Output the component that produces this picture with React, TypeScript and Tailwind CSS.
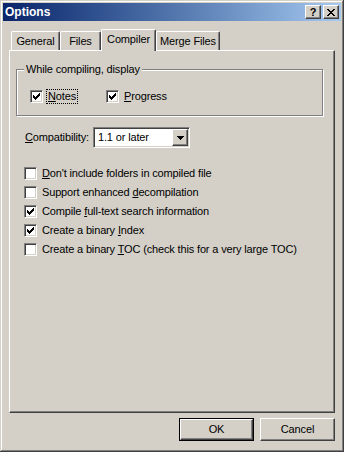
import React from "react";

const raised =
  "border border-t-white border-l-white border-r-[#404040] border-b-[#404040] shadow-[inset_-1px_-1px_#808080]";
const sunken =
  "border border-t-[#808080] border-l-[#808080] border-r-white border-b-white shadow-[inset_1px_1px_#404040,inset_-1px_-1px_#d4d0c8]";

// classic 7x7 tick, one rect per run of pixels
const tickRuns: [number, number, number][] = [
  [0, 6, 1],
  [1, 5, 2],
  [2, 0, 1],
  [2, 4, 3],
  [3, 0, 2],
  [3, 3, 3],
  [4, 0, 5],
  [5, 1, 3],
  [6, 2, 1],
];

const Tick = () => (
  <svg width="7" height="7" viewBox="0 0 7 7" shapeRendering="crispEdges">
    {tickRuns.map(([y, x, w], i) => (
      <rect key={i} x={x} y={y} width={w} height={1} fill="#000" />
    ))}
  </svg>
);

const CheckBox = ({ checked }: { checked?: boolean }) => (
  <div className={`w-[13px] h-[13px] shrink-0 bg-white flex items-center justify-center ${sunken}`}>
    {checked && <Tick />}
  </div>
);

const Arrow = () => (
  <svg width="7" height="4" viewBox="0 0 7 4" shapeRendering="crispEdges">
    <rect x="0" y="0" width="7" height="1" fill="#000" />
    <rect x="1" y="1" width="5" height="1" fill="#000" />
    <rect x="2" y="2" width="3" height="1" fill="#000" />
    <rect x="3" y="3" width="1" height="1" fill="#000" />
  </svg>
);

const CloseGlyph = () => (
  <svg width="8" height="7" viewBox="0 0 8 7" shapeRendering="crispEdges">
    {[0, 1, 2, 3, 4, 5, 6].map((i) => (
      <React.Fragment key={i}>
        <rect x={i} y={i} width={2} height={1} fill="#000" />
        <rect x={6 - i} y={i} width={2} height={1} fill="#000" />
      </React.Fragment>
    ))}
  </svg>
);

const Row = ({ checked, children }: { checked?: boolean; children: React.ReactNode }) => (
  <div className="h-[13px] flex items-center gap-[5px]">
    <CheckBox checked={checked} />
    <span className="leading-[13px] whitespace-nowrap">{children}</span>
  </div>
);

const Tab = ({ label, width, active }: { label: string; width: string; active?: boolean }) =>
  active ? (
    <div
      className={`${width} h-[22px] -mb-[1px] relative z-10 bg-[#d4d0c8] border-l border-t border-r border-l-white border-t-white border-r-[#404040] rounded-tl-[2px] rounded-tr-[2px] shadow-[inset_-1px_0_#808080] flex items-center justify-center pb-[3px]`}
    >
      {label}
    </div>
  ) : (
    <div
      className={`${width} h-[19px] bg-[#d4d0c8] border-l border-t border-r border-l-white border-t-white border-r-[#404040] rounded-tl-[2px] rounded-tr-[2px] shadow-[inset_-1px_0_#808080] flex items-center justify-center pt-[1px]`}
    >
      {label}
    </div>
  );

export default function App() {
  return (
    <div className="w-[344px] h-[452px] bg-[#d4d0c8] p-[3px] flex flex-col text-[11px] tracking-[-0.15px] text-black font-['Liberation_Sans',Arial,sans-serif] shadow-[inset_-1px_-1px_#404040,inset_1px_1px_#d4d0c8,inset_-2px_-2px_#808080,inset_2px_2px_#ffffff]">
      {/* title bar */}
      <div className="h-[18px] shrink-0 flex items-center justify-between pl-[2px] pr-[2px] bg-linear-to-r from-[#0a246a] to-[#a6caf0]">
        <span className="text-white font-bold text-[12px] tracking-normal leading-[13px]">Options</span>
        <div className="flex gap-[2px]">
          <div className={`w-[16px] h-[14px] bg-[#d4d0c8] flex items-center justify-center font-bold text-[11px] leading-[11px] ${raised}`}>
            ?
          </div>
          <div className={`w-[16px] h-[14px] bg-[#d4d0c8] flex items-center justify-center ${raised}`}>
            <CloseGlyph />
          </div>
        </div>
      </div>

      <div className="px-[6px] flex flex-col">
        {/* tabs */}
        <div className="mt-[8px] h-[21px] pl-[2px] flex items-end">
          <Tab label="General" width="w-[49px]" />
          <Tab label="Files" width="w-[41px]" />
          <Tab label="Compiler" width="w-[55px]" active />
          <Tab label="Merge Files" width="w-[64px]" />
        </div>

        {/* panel */}
        <div className="w-[326px] h-[363px] border border-l-white border-t-white border-r-[#404040] border-b-[#404040] shadow-[inset_-1px_-1px_#808080] pl-[6px] flex flex-col">
          {/* group box */}
          <div className="mt-[18px] w-[307px] h-[47px] relative border border-[#808080] shadow-[inset_1px_1px_#ffffff,1px_1px_#ffffff] pt-[19px] pl-[13px] flex items-start">
            <span className="absolute -top-[7px] left-[7px] px-[2px] bg-[#d4d0c8] leading-[13px] whitespace-nowrap">
              While compiling, display
            </span>
            <div className="w-[76px] h-[15px] flex items-center gap-[3px]">
              <CheckBox checked />
              <span className="border border-dotted border-black px-[1px] leading-[13px]">
                <u>N</u>otes
              </span>
            </div>
            <div className="h-[15px] flex items-center gap-[3px]">
              <CheckBox checked />
              <span className="border border-transparent px-[1px] leading-[13px]">
                <u>P</u>rogress
              </span>
            </div>
          </div>

          {/* compatibility */}
          <div className="mt-[11px] ml-[9px] h-[21px] flex items-center">
            <span className="w-[68px] leading-[13px]">
              <u>C</u>ompatibility:
            </span>
            <div className={`w-[97px] h-[21px] bg-white flex items-center p-[1px] ${sunken}`}>
              <span className="flex-1 pl-[3px] leading-[13px]">1.1 or later</span>
              <div className={`w-[16px] h-[17px] bg-[#d4d0c8] flex items-center justify-center ${raised}`}>
                <Arrow />
              </div>
            </div>
          </div>

          {/* options list */}
          <div className="mt-[19px] ml-[8px] flex flex-col gap-[6px]">
            <Row>
              <u>D</u>on't include folders in compiled file
            </Row>
            <Row>
              Support enhanced <u>d</u>ecompilation
            </Row>
            <Row checked>
              Compile <u>f</u>ull-text search information
            </Row>
            <Row checked>
              Create a binary <u>I</u>ndex
            </Row>
            <Row>
              Create a binary <u>T</u>OC (check this for a very large TOC)
            </Row>
          </div>
        </div>

        {/* buttons */}
        <div className="mt-[5px] flex justify-end gap-[6px]">
          <div className="w-[75px] h-[23px] border border-black">
            <div className={`w-full h-full bg-[#d4d0c8] flex items-center justify-center leading-[13px] ${raised}`}>
              OK
            </div>
          </div>
          <div className={`w-[75px] h-[23px] bg-[#d4d0c8] flex items-center justify-center leading-[13px] ${raised}`}>
            Cancel
          </div>
        </div>
      </div>
    </div>
  );
}
